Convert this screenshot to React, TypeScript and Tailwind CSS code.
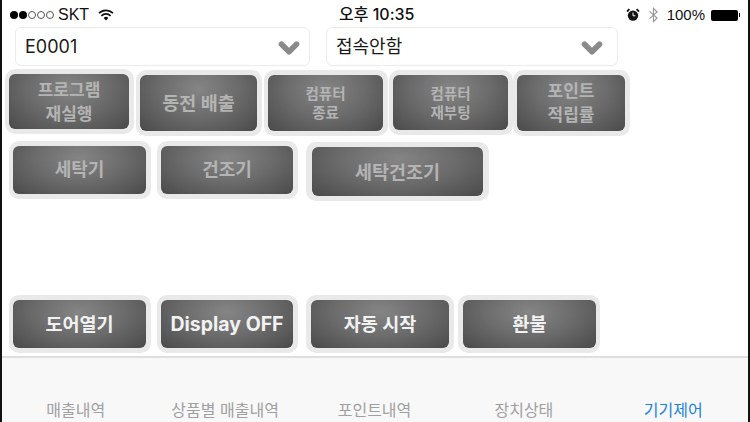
import { ChevronDown } from 'lucide-react';

const KR = "font-['Inter','Noto_Sans_CJK_KR',sans-serif]";

const Btn = ({ label, box, text }: { label: string[]; box: string; text: string }) => (
  <div className={`shrink-0 rounded-[10px] border-y-[5px] border-[#e9e9e9] ${box}`}>
    <div className="h-full rounded-[6px] bg-[radial-gradient(ellipse_at_50%_25%,#858585_0%,#6a6a6a_50%,#4a4a4a_100%)] flex flex-col items-center justify-center">
      {label.map((line) => (
        <span key={line} className={text}>
          {line}
        </span>
      ))}
    </div>
  </div>
);

const Select = ({ label, box }: { label: string; box: string }) => (
  <div className={`h-[39px] rounded-[6px] border border-[#ececec] flex items-center justify-between ${box}`}>
    <span className="text-[18px] leading-none text-[#1a1a1a]">{label}</span>
    <ChevronDown size={30} strokeWidth={4.5} className="text-[#8a8a8a] mt-[3px]" />
  </div>
);

const sides = 'border-l-[4px] border-r-[5px]';
const row1Dim = 'text-[17px] leading-[24px] font-semibold text-[#b4b4b4]';
const rowDim = 'text-[18px] leading-[24px] font-semibold text-[#b4b4b4]';
const wideDim = 'text-[18.5px] leading-[24px] font-semibold text-[#b4b4b4]';
const small = 'text-[14.5px] leading-[19px] font-semibold text-[#b4b4b4]';
const on = 'text-[18.5px] leading-[24px] font-semibold text-[#f2f2f2]';
const onLatin = 'text-[19.5px] leading-[24px] font-bold text-[#f2f2f2]';

export default function App() {
  return (
    <div className={`w-[750px] h-[422px] overflow-hidden bg-white border-l-2 border-r-2 border-[#111] flex flex-col ${KR}`}>
      <div className="h-[27px] shrink-0 relative flex items-start justify-between pl-[8px] pr-[8px] pt-[6px] text-[#111]">
        <div className="flex items-center">
          <div className="flex gap-[1px] items-center">
            <i className="w-[8px] h-[8px] rounded-full bg-black" />
            <i className="w-[8px] h-[8px] rounded-full bg-black" />
            <i className="w-[8px] h-[8px] rounded-full border border-[#555]" />
            <i className="w-[8px] h-[8px] rounded-full border border-[#555]" />
            <i className="w-[8px] h-[8px] rounded-full border border-[#555]" />
          </div>
          <span className="ml-[4px] text-[16px] leading-[18px] font-['Liberation_Sans',sans-serif]">SKT</span>
          <svg width="16" height="12" viewBox="0 0 16 12" className="ml-[9px]">
            <path d="M1 4.2a10 10 0 0 1 14 0M3.4 6.8a6.6 6.6 0 0 1 9.2 0" fill="none" stroke="#111" strokeWidth="1.7" />
            <path d="M5.6 8.9a3.4 3.4 0 0 1 4.8 0L8 11.4z" fill="#111" />
          </svg>
        </div>
        <span className="absolute left-[337px] top-[4px] text-[16px] leading-[20px] font-medium">오후 10:35</span>
        <div className="flex items-center">
          <svg width="14" height="14" viewBox="0 0 14 14">
            <circle cx="7" cy="7.6" r="5.2" fill="#111" />
            <path d="M1 3.6 3.4 1.2M13 3.6 10.6 1.2" stroke="#111" strokeWidth="1.8" />
            <path d="M7 4.6v3.2h2.4" stroke="#fff" strokeWidth="1" fill="none" />
          </svg>
          <svg width="13" height="16" viewBox="0 0 12 16" className="ml-[7px]">
            <path d="M2 4.4 9.6 11 6 14.6V1.4L9.6 5 2 11.6" fill="none" stroke="#9a9a9a" strokeWidth="1.2" />
          </svg>
          <span className="ml-[7px] text-[15px] leading-[18px] font-['Liberation_Sans',sans-serif]">100%</span>
          <div className="ml-[6px] w-[27px] h-[11px] rounded-[2px] bg-black" />
          <div className="ml-[1px] w-[1px] h-[4px] bg-black" />
        </div>
      </div>

      <div className="flex h-[42px] shrink-0 pl-[13px] gap-[16px]">
        <Select label="E0001" box="w-[295px] pl-[9px] pr-[5px]" />
        <Select label="접속안함" box="w-[292px] pl-[9px] pr-[10px]" />
      </div>

      <div className="flex items-start h-[72px] shrink-0 pl-[3px]">
        <Btn label={['프로그램', '재실행']} box={`w-[129px] h-[65px] ${sides}`} text={row1Dim} />
        <Btn label={['동전 배출']} box={`w-[126px] h-[66px] mt-[1px] ml-[2px] ${sides}`} text={wideDim} />
        <Btn label={['컴퓨터', '종료']} box={`w-[124px] h-[66px] mt-[1px] ml-[2px] ${sides}`} text={small} />
        <Btn label={['컴퓨터', '재부팅']} box={`w-[124px] h-[65px] mt-[1px] ml-[1px] ${sides}`} text={small} />
        <Btn label={['포인트', '적립률']} box={`w-[117px] h-[66px] mt-[1px] ${sides}`} text={row1Dim} />
      </div>

      <div className="flex items-start h-[154px] shrink-0 pl-[7px]">
        <Btn label={['세탁기']} box={`w-[142px] h-[58px] ${sides}`} text={rowDim} />
        <Btn label={['건조기']} box={`w-[141px] h-[58px] ml-[6px] ${sides}`} text={rowDim} />
        <Btn label={['세탁건조기']} box="w-[183px] h-[59px] mt-[1px] ml-[8px] border-x-[6px]" text={wideDim} />
      </div>

      <div className="flex items-start h-[61px] shrink-0 pl-[7px]">
        <Btn label={['도어열기']} box={`w-[142px] h-[58px] ${sides}`} text={on} />
        <Btn label={['Display OFF']} box={`w-[141px] h-[58px] ml-[6px] ${sides}`} text={onLatin} />
        <Btn label={['자동 시작']} box="w-[148px] h-[58px] ml-[8px] border-x-[5px]" text={on} />
        <Btn label={['환불']} box="w-[142px] h-[58px] ml-[4px] border-l-[5px] border-r-[4px]" text={on} />
      </div>

      <div className="flex-1 bg-[#f8f8f8] border-t-2 border-[#dedede] grid grid-cols-5 text-center pt-[42px] -ml-[1px] text-[16px] leading-[20px] text-[#a0a0a0]">
        <span>매출내역</span>
        <span>상품별 매출내역</span>
        <span>포인트내역</span>
        <span>장치상태</span>
        <span className="text-[#1a82e0]">기기제어</span>
      </div>
    </div>
  );
}
